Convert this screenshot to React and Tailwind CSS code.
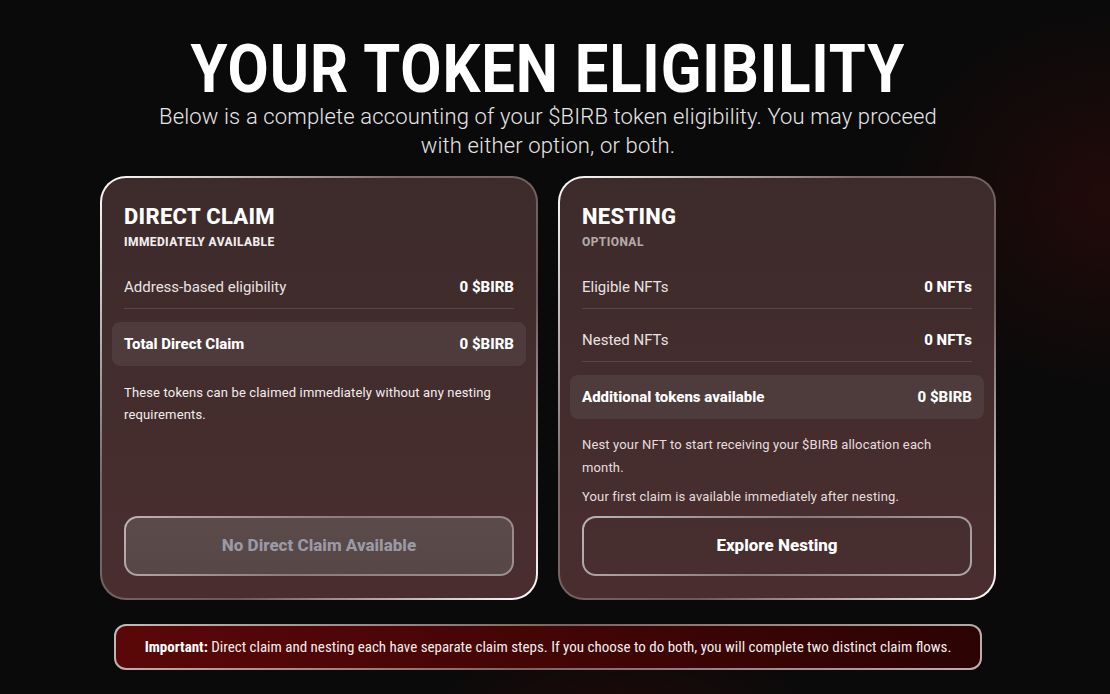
import React from "react";

const cardBg =
  "[background:linear-gradient(180deg,#3d2b2b,#4a2e2f)_padding-box,linear-gradient(135deg,#ffffff_0%,#7a6a6a_35%,#6a5a5a_65%,#ffffff_100%)_border-box]";

function Row({ label, value }) {
  return (
    <div className="flex items-center justify-between h-[42px] border-b border-[#5a4646]">
      <span className="text-[15px] text-[#e8e2e2]">{label}</span>
      <span className="text-[15px] font-extrabold text-white">{value}</span>
    </div>
  );
}

function Highlight({ label, value }) {
  return (
    <div className="-mx-3 px-3 h-[44px] rounded-lg bg-[#4e3b3b] flex items-center justify-between">
      <span className="text-[15px] font-extrabold text-white">{label}</span>
      <span className="text-[15px] font-extrabold text-white">{value}</span>
    </div>
  );
}

export default function App() {
  return (
    <div
      className="w-[1110px] h-[694px] overflow-hidden pr-[14px] bg-[#0a0a0a] bg-[radial-gradient(ellipse_300px_260px_at_1110px_200px,rgba(70,10,10,0.4),transparent_75%),radial-gradient(ellipse_260px_120px_at_620px_720px,rgba(70,8,8,0.35),transparent_75%)] text-white flex flex-col items-center"
      style={{ fontFamily: "Roboto, 'Noto Sans', sans-serif" }}
    >
      <h1 className="mt-[34px] text-[66px] leading-[72px] font-bold tracking-[1px] text-white scale-x-[0.905] whitespace-nowrap">
        YOUR TOKEN ELIGIBILITY
      </h1>
      <p className="mt-[-4px] w-[800px] text-center text-[22px] leading-[29px] tracking-[0.15px] text-[#e6e6e6] font-light">
        Below is a complete accounting of your $BIRB token eligibility. You may proceed with either option, or both.
      </p>

      <div className="mt-[16px] flex gap-[20px]">
        {/* Direct claim */}
        <div className={"w-[438px] h-[424px] rounded-[26px] border-2 border-transparent px-[22px] pt-[26px] pb-[22px] flex flex-col " + cardBg}>
          <div className="text-[22px] leading-[26px] font-extrabold tracking-[0.3px]">DIRECT CLAIM</div>
          <div className="mt-[5px] text-[12px] leading-[14px] font-extrabold tracking-[0.4px] text-[#f1eded]">IMMEDIATELY AVAILABLE</div>
          <div className="mt-[18px]">
            <Row label="Address-based eligibility" value="0 $BIRB" />
            <div className="h-[13px]" />
            <Highlight label="Total Direct Claim" value="0 $BIRB" />
          </div>
          <p className="mt-[16px] text-[13px] leading-[22px] tracking-[0.15px] text-[#f2eeee]">
            These tokens can be claimed immediately without any nesting requirements.
          </p>
          <div className="flex-1" />
          <button className="h-[60px] w-full rounded-[14px] border-2 border-transparent [background:linear-gradient(#5a4a4a,#574747)_padding-box,linear-gradient(135deg,#bdb3b3,#8a7c7c_50%,#9d9090)_border-box] text-[17px] font-extrabold text-[#9a9aa6]">
            No Direct Claim Available
          </button>
        </div>

        {/* Nesting */}
        <div className={"w-[438px] h-[424px] rounded-[26px] border-2 border-transparent px-[22px] pt-[26px] pb-[22px] flex flex-col " + cardBg}>
          <div className="text-[22px] leading-[26px] font-extrabold tracking-[0.3px]">NESTING</div>
          <div className="mt-[5px] text-[12px] leading-[14px] font-extrabold tracking-[0.4px] text-[#b3a8a8]">OPTIONAL</div>
          <div className="mt-[18px]">
            <Row label="Eligible NFTs" value="0 NFTs" />
            <div className="h-[11px]" />
            <Row label="Nested NFTs" value="0 NFTs" />
            <div className="h-[13px]" />
            <Highlight label="Additional tokens available" value="0 $BIRB" />
          </div>
          <p className="mt-[14px] text-[13px] leading-[23px] tracking-[0.15px] text-[#e6dede]">
            Nest your NFT to start receiving your $BIRB allocation each month.
          </p>
          <p className="mt-[6px] text-[13px] leading-[23px] tracking-[0.15px] text-[#e6dede]">
            Your first claim is available immediately after nesting.
          </p>
          <div className="flex-1" />
          <button className="h-[60px] w-full rounded-[14px] border-2 border-transparent [background:linear-gradient(#462e2f,#482e2f)_padding-box,linear-gradient(135deg,#bdb3b3,#8a7c7c_50%,#b0a5a5)_border-box] text-[17px] font-extrabold text-white">
            Explore Nesting
          </button>
        </div>
      </div>

      <div className="mt-[24px] w-[868px] h-[46px] rounded-[12px] border-2 border-transparent [background:linear-gradient(90deg,#5b0707,#2c0303)_padding-box,linear-gradient(135deg,#c7b9b9,#7a6464_50%,#c0b0b0)_border-box] flex items-center justify-center">
        <p className="text-[15px] text-[#f3eeee]" style={{ fontFamily: "'Liberation Sans Narrow', 'Roboto Condensed', sans-serif" }}>
          <span className="font-bold text-white">Important:</span> Direct claim and nesting each have separate claim steps. If you choose to do both, you will complete two distinct claim flows.
        </p>
      </div>
    </div>
  );
}
